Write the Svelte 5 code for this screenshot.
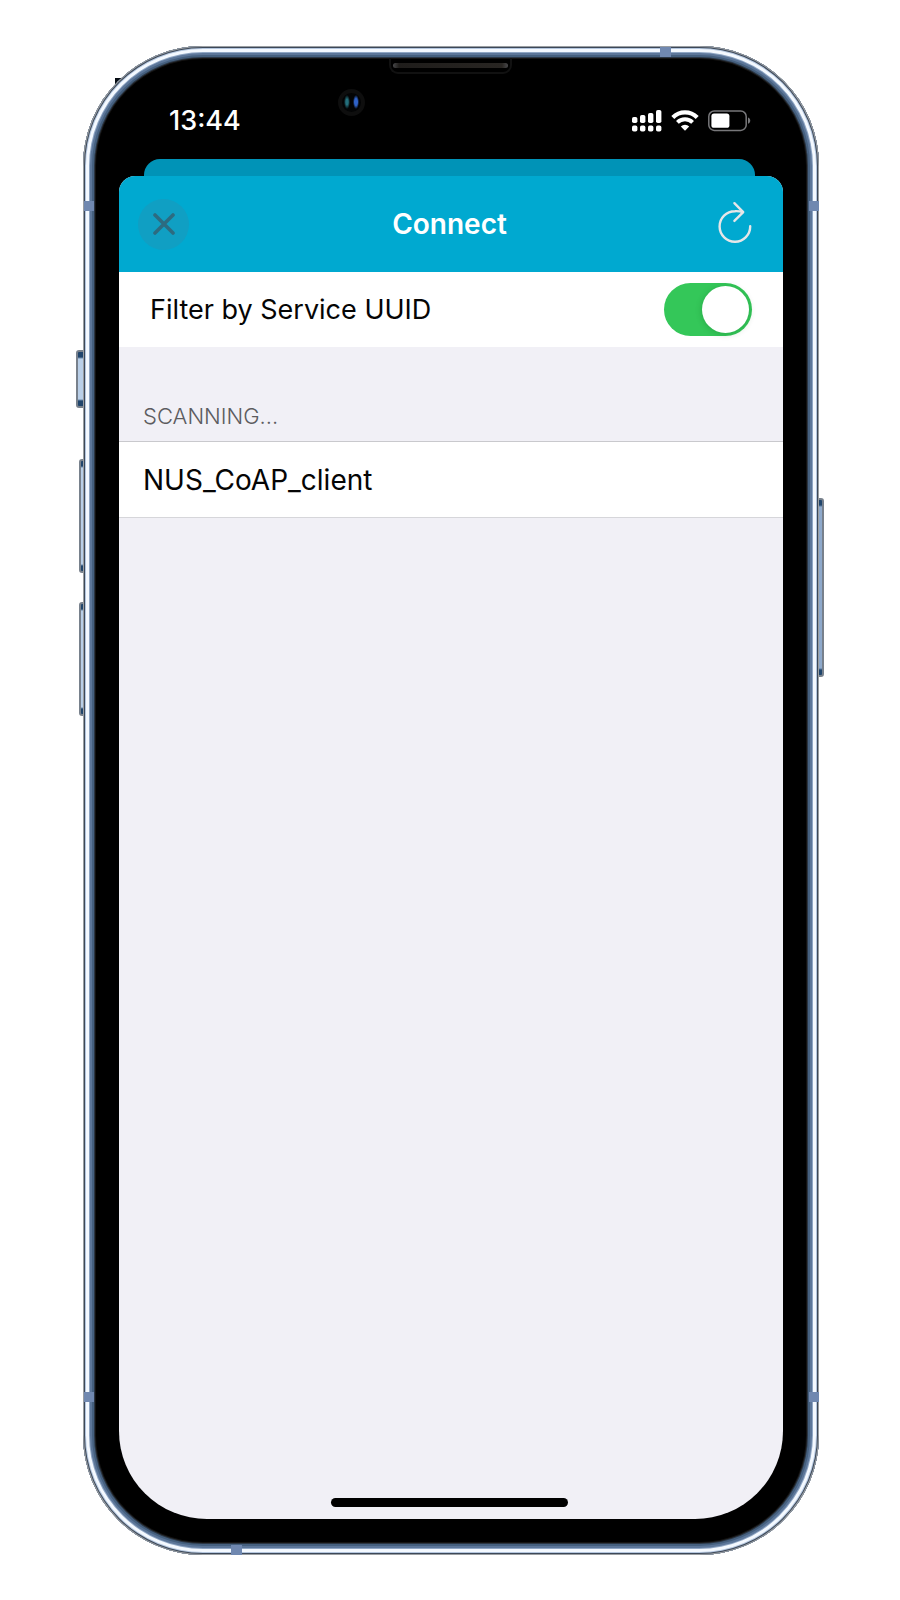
<script>
  let filterByService = $state(true);
  let devices = $state(['NUS_CoAP_client']);
  const bars = [
    { x: 0, y: 7, h: 6 },
    { x: 8, y: 5, h: 8 },
    { x: 16, y: 3, h: 10 },
    { x: 24, y: 0, h: 13 }
  ];
</script>

<main class="stage">
  <div class="phone">
    <i class="fleck left"></i>
    <i class="fleck right"></i>
    <i class="key mute"></i>
    <i class="key up"></i>
    <i class="key down"></i>
    <i class="key power"></i>

    <div class="frame">
      <i class="band side l t"></i>
      <i class="band side r t"></i>
      <i class="band side l b"></i>
      <i class="band side r b"></i>
      <i class="band flat top"></i>
      <i class="band flat bottom"></i>
      <i class="speaker"></i>
      <i class="camera"></i>

      <header class="status">
        <time>13:44</time>
        <div class="indicators">
          <svg width="30" height="22" viewBox="0 0 30 22" fill="#fff" aria-hidden="true">
            {#each bars as b}
              <rect x={b.x} y={b.y} width="5.4" height={b.h} rx="1.8" />
              <rect x={b.x} y="15.6" width="5.4" height="6" rx="1.8" />
            {/each}
          </svg>
          <svg width="28" height="22" viewBox="0 0 28 22" fill="none" aria-hidden="true">
            <path d="M1.8 7.4a17.4 17.4 0 0 1 24.4 0" stroke="#fff" stroke-width="4.2" />
            <path d="M6.4 12.4a10.8 10.8 0 0 1 15.2 0" stroke="#fff" stroke-width="3.9" />
            <path d="M14 20.8l-4.2-4.3a6 6 0 0 1 8.4 0z" fill="#fff" />
          </svg>
          <svg width="43" height="22" viewBox="0 0 43 22" fill="none" aria-hidden="true">
            <rect x="0.8" y="1" width="37.4" height="19.4" rx="5.5" stroke="#77777a" stroke-width="1.5" />
            <rect x="3.4" y="3.6" width="18" height="14.2" rx="2.6" fill="#fff" />
            <path d="M40 7.6c3 1 3 5.2 0 6.2z" fill="#77777a" />
          </svg>
        </div>
      </header>

      <div class="behind"></div>

      <section class="sheet">
        <div class="nav">
          <button class="close" aria-label="Close">
            <svg width="22" height="22" viewBox="0 0 22 22" fill="none" aria-hidden="true">
              <path d="M2 2l18 18M20 2L2 20" stroke="#2d6b80" stroke-width="3.6" stroke-linecap="round" />
            </svg>
          </button>
          <h1>Connect</h1>
          <button class="refresh" aria-label="Refresh">
            <svg width="34" height="42" viewBox="0 0 34 42" fill="none" stroke="#e6e6e8" stroke-width="2.4" stroke-linecap="round" stroke-linejoin="round" aria-hidden="true">
              <path d="M32.2 25.2A15.3 15.3 0 1 1 16.9 10.2Q21 10 24.8 11" />
              <path d="M16.4 2.2l8.8 8.9-8.8 8.8" />
            </svg>
          </button>
        </div>

        <div class="row filter">
          <label for="filter">Filter by Service UUID</label>
          <input id="filter" type="checkbox" role="switch" bind:checked={filterByService} />
        </div>

        <h2>SCANNING...</h2>
        <ul>
          {#each devices as name}
            <li class="row">{name}</li>
          {/each}
        </ul>

        <div class="home"></div>
      </section>
    </div>
  </div>
</main>

<style>
  :global(body) {
    background: #fff;
  }
  .stage {
    box-sizing: border-box;
    min-height: 100vh;
    padding: 46px 81px 45px 83px;
    display: flex;
    font-family: Inter, 'Liberation Sans', sans-serif;
    color: #050505;
  }
  .phone {
    position: relative;
    flex: 1;
    display: flex;
  }
  .frame {
    position: relative;
    flex: 1;
    display: flex;
    flex-direction: column;
    padding: 0 36px 36px;
    border-radius: 120px;
    background: #000;
    box-shadow:
      inset 0 0 0 1px #9a9ea2,
      inset 0 0 0 2px #3c4858,
      inset 0 0 0 3px #b4c6de,
      inset 0 0 0 6px #f4f9ff,
      inset 0 0 0 7px #8fa6c4,
      inset 0 0 0 9px #5c7699,
      inset 0 0 0 11px #45607f,
      inset 0 0 0 12px #2b3644,
      inset 0 0 0 13px #141312;
  }
  .fleck {
    position: absolute;
    top: 32px;
    width: 7px;
    height: 8px;
    background: #050b12;
  }
  .fleck.left { left: 32px; }
  .fleck.right { right: 36px; top: 34px; }
  .key {
    position: absolute;
    box-sizing: border-box;
    border: 2px solid #78818c;
    border-radius: 3px;
    background: linear-gradient(#20456c 5px, #b9cfe8 7px, #b9cfe8 calc(100% - 7px), #20456c calc(100% - 5px));
  }
  .mute { left: -7px; top: 304px; width: 10px; height: 58px; }
  .up { left: -4px; top: 413px; width: 8px; height: 114px; }
  .down { left: -4px; top: 556px; width: 8px; height: 114px; }
  .power { right: -5px; top: 452px; width: 9px; height: 179px; background: linear-gradient(#20456c 5px, #8ea9cb 7px, #8ea9cb calc(100% - 7px), #20456c calc(100% - 5px)); }
  .band {
    position: absolute;
    background: #7088b0;
  }
  .side { width: 10px; height: 10px; }
  .side.l { left: 1px; }
  .side.r { right: 0; }
  .side.t { top: 155px; }
  .side.b { bottom: 153px; }
  .flat { width: 11px; height: 10px; }
  .flat.top { top: 1px; right: 148px; }
  .flat.bottom { bottom: 0; left: 148px; }
  .speaker {
    position: absolute;
    box-sizing: border-box;
    top: 12px;
    left: 306px;
    width: 123px;
    height: 16px;
    border: 2px solid #111;
    border-top: 0;
    border-radius: 0 0 9px 9px;
  }
  .speaker::before {
    content: '';
    position: absolute;
    inset: 5px 2px 4px;
    border-radius: 3px;
    background: linear-gradient(90deg, #48484a, #1f1d1b 6px, #282522 calc(100% - 6px), #48484a);
  }
  .camera {
    position: absolute;
    box-sizing: border-box;
    top: 43px;
    left: 255px;
    width: 27px;
    height: 27px;
    border: 4px solid #0e0e0e;
    border-radius: 50%;
    background:
      radial-gradient(ellipse 3px 7px at 5px 9px, #236f7c 40%, transparent),
      radial-gradient(ellipse 3px 7px at 14px 9px, #2f62c8 50%, transparent),
      #030405;
  }
  .status {
    display: flex;
    justify-content: space-between;
    align-items: flex-end;
    box-sizing: border-box;
    height: 113px;
    padding: 0 32px 27px 50px;
    color: #fff;
  }
  time {
    font-size: 27px;
    line-height: 22px;
    font-weight: 500;
  }
  .indicators {
    display: flex;
    gap: 9px;
  }
  .behind {
    height: 17px;
    margin: 0 28px 0 25px;
    border-radius: 16px 16px 0 0;
    background: #0093b7;
  }
  .sheet {
    flex: 1;
    display: flex;
    flex-direction: column;
    overflow: hidden;
    border-radius: 16px 16px 88px 88px;
    background: #f1f0f6;
  }
  .nav {
    display: grid;
    grid-template-columns: 1fr auto 1fr;
    align-items: center;
    height: 96px;
    padding: 0 31px 0 28px;
    background: #00a9d0;
  }
  button {
    display: flex;
    align-items: center;
    justify-content: center;
    padding: 0;
    border: 0;
    background: none;
    cursor: pointer;
  }
  .close {
    width: 51px;
    height: 51px;
    margin-left: -9px;
    border-radius: 50%;
    background: #109fc3;
  }
  .refresh {
    justify-self: end;
    margin-bottom: 4px;
  }
  h1 {
    margin: 0;
    font-size: 28px;
    line-height: 34px;
    font-weight: 600;
    color: #fff;
  }
  .row {
    display: flex;
    align-items: center;
    justify-content: space-between;
    height: 75px;
    padding: 0 24px;
    background: #fff;
    font-size: 28px;
    line-height: 34px;
  }
  .filter {
    padding: 0 31px;
    font-size: 27px;
  }
  input {
    appearance: none;
    box-sizing: border-box;
    width: 88px;
    height: 53px;
    margin: 0;
    padding: 3px;
    border-radius: 27px;
    background: #d8d8dc;
    display: flex;
    cursor: pointer;
  }
  input::before {
    content: '';
    width: 47px;
    height: 47px;
    border-radius: 50%;
    background: #fff;
    box-shadow: 0 1px 6px rgba(0, 80, 20, 0.25);
  }
  input:checked {
    background: #34c759;
    justify-content: flex-end;
  }
  h2 {
    box-sizing: border-box;
    height: 94px;
    margin: 0;
    padding: 55px 24px 0;
    font-size: 22px;
    line-height: 28px;
    font-weight: 300;
    color: #5c5c60;
  }
  ul {
    margin: 0;
    padding: 0;
    list-style: none;
  }
  li {
    border-bottom: 1px solid #d6d6da;
  }
  li:first-child {
    border-top: 1px solid #c9c9cd;
  }
  .home {
    align-self: center;
    width: 237px;
    height: 9px;
    margin: auto 3px 12px 0;
    border-radius: 5px;
    background: #000;
  }
</style>
